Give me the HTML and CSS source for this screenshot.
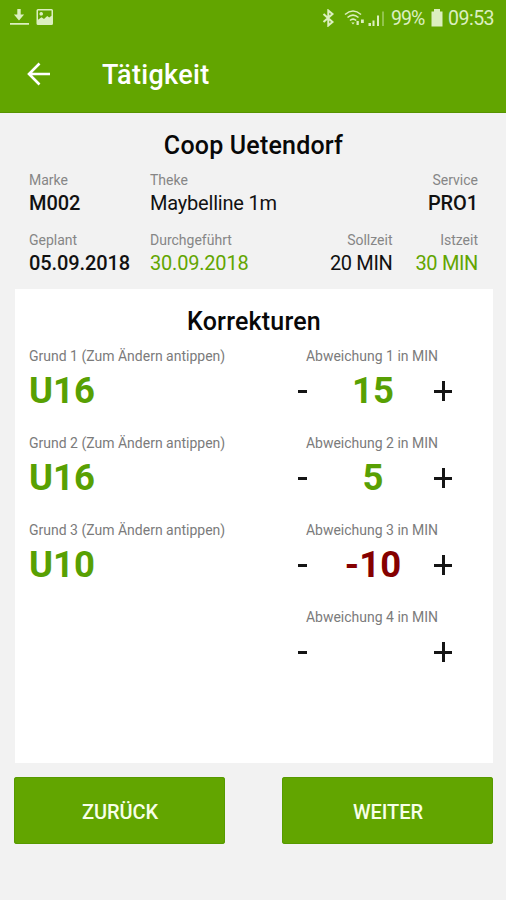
FILE: index.html
```html
<!DOCTYPE html>
<html lang="de">
<head>
<meta charset="utf-8">
<title>Tätigkeit</title>
<link rel="stylesheet" href="styles.css">
</head>
<body>
<header class="top">
  <div class="status">
    <svg class="st-left" width="46" height="20" viewBox="0 0 46 20" fill="currentColor">
      <path d="M7.300 1h3.400v5.500h3.400L9 12.500 3.900 6.500h3.400zM0 15h19v1.700H0z"/>
      <path fill-rule="evenodd" d="M28 1h13.500q1.500 0 1.500 1.500v13q0 1.500-1.500 1.500H28q-1.500 0-1.500-1.500v-13Q26.500 1 28 1zM28 2.500v9.300l3.500-2.500 2.500 1.700 3.200-3 2 1.500 2.300-1.700V2.500zM31.200 4a1.800 1.800 0 1 0 .01 0z"/>
    </svg>
    <svg class="st-bt" width="13" height="18" viewBox="0 0 13 18" fill="none" stroke="currentColor" stroke-width="2">
      <path d="M1.500 5l9 8L6.300 16.500v-15L10.500 5l-9 8"/>
    </svg>
    <svg class="st-net" width="41" height="18" viewBox="0 0 41 18">
      <g fill="none" stroke="currentColor" stroke-width="1.600">
        <path d="M1 5.500q8-7 16 0M3.500 8.500q5.500-4.800 11 0M6 11.500q3-2.700 6.200 0"/>
      </g>
      <g fill="currentColor">
        <path d="M7.300 13.500h3.400L9 15.600zM12.500 12h2.300v4h-2.300zM17 10.500h2.800v3.500H17z"/>
        <path d="M24.500 14h2.500v3h-2.500zM28.500 11.500h2v5.500h-2zM33 6.500h2v10.500h-2z"/>
        <path opacity=".4" d="M38 2.500h2v14.500h-2z"/>
      </g>
    </svg>
    <span class="st-pct">99%</span>
    <svg class="st-bat" width="12" height="18" viewBox="0 0 12 18" fill="currentColor"><path d="M3 0h6v2.500h2.500v15H.5v-15H3z"/></svg>
    <span class="st-time">09:53</span>
  </div>
  <div class="bar">
    <svg width="24" height="24" viewBox="0 0 24 24" fill="none" stroke="currentColor" stroke-width="2.600"><path d="M23 12H2.500M12.500 1.500L2 12l10.500 10.500"/></svg>
    <h1>Tätigkeit</h1>
  </div>
</header>
<main>
  <section class="info">
    <h2>Coop Uetendorf</h2>
    <div class="row">
      <div class="field first"><label>Marke</label><b>M002</b></div>
      <div class="field grow"><label>Theke</label><span>Maybelline 1m</span></div>
      <div class="field right"><label>Service</label><b>PRO1</b></div>
    </div>
    <div class="row">
      <div class="field first"><label>Geplant</label><b>05.09.2018</b></div>
      <div class="field grow green"><label>Durchgeführt</label><span>30.09.2018</span></div>
      <div class="field right"><label>Sollzeit</label><span>20 MIN</span></div>
      <div class="field right green last"><label>Istzeit</label><span>30 MIN</span></div>
    </div>
  </section>
  <section class="card">
    <h2>Korrekturen</h2>
    <div class="entry">
      <div class="reason"><label>Grund 1 (Zum Ändern antippen)</label><strong>U16</strong></div>
      <div class="dev"><label>Abweichung 1 in MIN</label><div class="step"><i class="minus"></i><strong>15</strong><i class="plus"></i></div></div>
    </div>
    <div class="entry">
      <div class="reason"><label>Grund 2 (Zum Ändern antippen)</label><strong>U16</strong></div>
      <div class="dev"><label>Abweichung 2 in MIN</label><div class="step"><i class="minus"></i><strong>5</strong><i class="plus"></i></div></div>
    </div>
    <div class="entry">
      <div class="reason"><label>Grund 3 (Zum Ändern antippen)</label><strong>U10</strong></div>
      <div class="dev"><label>Abweichung 3 in MIN</label><div class="step"><i class="minus"></i><strong class="neg">-10</strong><i class="plus"></i></div></div>
    </div>
    <div class="entry">
      <div class="reason"></div>
      <div class="dev"><label>Abweichung 4 in MIN</label><div class="step"><i class="minus"></i><strong></strong><i class="plus"></i></div></div>
    </div>
  </section>
  <div class="actions"><button>ZURÜCK</button><button>WEITER</button></div>
</main>
</body>
</html>
```
FILE: styles.css
```css
* { box-sizing: border-box; }
body { margin: 0; height: 900px; overflow: hidden; background: #f2f2f2; color: #111; font-family: Roboto, "Liberation Sans", sans-serif; }
h1, h2 { margin: 0; font-weight: 500; }
svg { display: block; flex: none; }
.top { height: 113px; background: #62a500; color: #fff; border-bottom: 1px solid #579400; }
.status { display: flex; align-items: center; height: 36px; padding: 0 11px 0 10px; color: #dcefc0; font-size: 19.5px; line-height: 34px; }
.status span { padding-top: 2px; }
.st-left { margin-right: auto; }
.st-bt { margin-right: 9px; }
.st-net { margin-right: 6px; }
.st-pct { width: 35px; margin-right: 5px; letter-spacing: -.9px; }
.st-bat { margin-right: 5px; }
.st-time { width: 47px; letter-spacing: -.5px; }
.bar { display: flex; align-items: center; height: 76px; padding-left: 27px; gap: 51px; }
.bar h1 { font-size: 27px; line-height: 76px; padding-top: 2px; letter-spacing: .32px; }
.info { height: 176px; padding: 18px 28px 0 29px; }
h2 { font-size: 25px; line-height: 30px; text-align: center; color: #080808; letter-spacing: .2px; }
.row { display: flex; height: 60px; padding-top: 10px; }
label { display: block; font-size: 14px; line-height: 18px; color: #868686; white-space: nowrap; letter-spacing: 0; }
.field { font-size: 20px; line-height: 28px; white-space: nowrap; letter-spacing: -.2px; }
.field b { font-weight: 500; letter-spacing: -.1px; }
.first { width: 121px; }
.grow { flex: 1; }
.right { text-align: right; }
.right span { letter-spacing: -.35px; }
.last { margin-left: 23px; }
.green { color: #62a500; }
.card { height: 474px; margin: 0 13px 0 15px; padding: 18px 14px 0; background: #fff; }
.entry { display: grid; grid-template-columns: 1fr 187px; height: 87px; padding-top: 10px; }
.card label { color: #7b7b7b; }
.entry strong { display: block; height: 50px; font-size: 36.5px; line-height: 52px; font-weight: 700; color: #58a003; }
.dev label { text-align: center; padding-right: 27px; }
.step { display: grid; grid-template-columns: 20px 1fr 45px; align-items: center; height: 50px; }
.step strong { text-align: center; }
.entry .neg { color: #850000; }
.minus { width: 9px; height: 3px; background: #151515; margin-left: 6px; margin-top: 3px; }
.plus { width: 18px; height: 20px; margin-top: 2px; background: linear-gradient(#151515, #151515) center / 18px 3px no-repeat, linear-gradient(#151515, #151515) center / 3px 20px no-repeat; }
.actions { display: flex; justify-content: space-between; padding: 14px 13px 0 14px; }
button { height: 67px; width: 211px; border: 0; border-radius: 3px; background: #62a500; color: #f7ffe8; font: 500 20px Roboto, sans-serif; letter-spacing: -.1px; padding: 2px 0 0 1px; box-shadow: inset 0 0 0 1px #579a00; }
```
